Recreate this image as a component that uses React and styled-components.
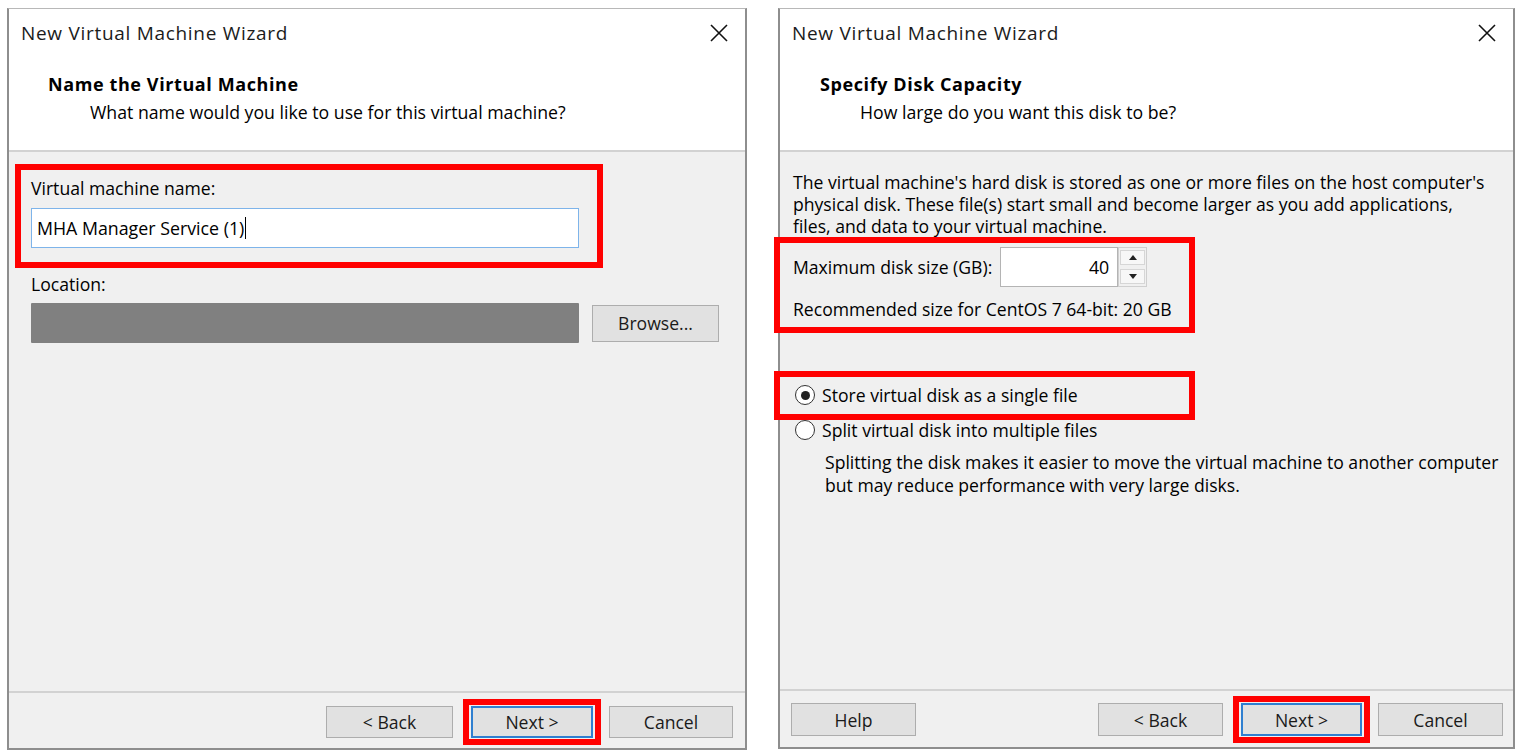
import React from "react";
import styled, { createGlobalStyle } from "styled-components";

const GlobalStyle = createGlobalStyle`
  body {
    margin: 0;
    background: #ffffff;
    font-family: "Open Sans", "Liberation Sans", sans-serif;
    color: #000000;
  }
`;

const Page = styled.div`
  display: flex;
  align-items: flex-start;
  gap: 31px;
  padding: 8px 0 0 7px;
  width: 1518px;
  height: 752px;
  box-sizing: border-box;
`;

const Dialog = styled.div`
  width: ${(p) => p.$w}px;
  height: ${(p) => p.$h}px;
  box-sizing: border-box;
  border: 2px solid #8e8e8e;
  border-top: 1px solid #b8b8b8;
  background: #f0f0f0;
  display: flex;
  flex-direction: column;
`;

const Header = styled.div`
  height: 143px;
  flex-shrink: 0;
  box-sizing: border-box;
  background: #ffffff;
  border-bottom: 2px solid #d2d2d2;
  padding: 12px 0 0 12px;
  position: relative;
`;

const TitleBar = styled.div`
  font-size: 19px;
  letter-spacing: 0.7px;
  line-height: 24px;
  color: #1b1b1b;
`;

const CloseButton = styled.div`
  position: absolute;
  top: 14px;
  right: 16px;
  width: 20px;
  height: 20px;
`;

const Heading = styled.div`
  margin: 27px 0 0 ${(p) => p.$indent}px;
  font-size: 18px;
  letter-spacing: 0.6px;
  font-weight: 700;
  line-height: 24px;
`;

const SubHeading = styled.div`
  margin: 4px 0 0 ${(p) => p.$indent}px;
  font-size: 17.7px;
  line-height: 24px;
`;

const Body = styled.div`
  flex: 1;
  display: flex;
  flex-direction: column;
  align-items: flex-start;
  padding: ${(p) => p.$pad};
  font-size: 17.6px;
`;

const Highlight = styled.div`
  border: 6px solid #ff0000;
  box-sizing: border-box;
  width: ${(p) => p.$w}px;
  margin: ${(p) => p.$m};
  padding: ${(p) => p.$pad};
`;

const Label = styled.div`
  line-height: ${(p) => p.$lh || 24}px;
  margin-top: ${(p) => p.$mt || 0}px;
  white-space: nowrap;
`;

const TextInput = styled.div`
  width: ${(p) => p.$w}px;
  height: 40px;
  box-sizing: border-box;
  margin-top: ${(p) => p.$mt || 0}px;
  background: #ffffff;
  border: 1px solid ${(p) => (p.$focused ? "#7eb4ea" : "#b4b4b4")};
  display: flex;
  align-items: center;
  justify-content: ${(p) => (p.$right ? "flex-end" : "flex-start")};
  padding: 0 8px 0 5px;
  font-size: 17.8px;
`;

const Caret = styled.span`
  display: inline-block;
  width: 1px;
  height: 22px;
  background: #000000;
  margin-left: 1px;
`;

const Row = styled.div`
  display: flex;
  align-items: center;
  gap: ${(p) => p.$gap || 0}px;
  margin-top: ${(p) => p.$mt || 0}px;
`;

const PathBar = styled.div`
  width: 548px;
  height: 40px;
  background: #808080;
  border-radius: 1px;
`;

const Button = styled.div`
  width: ${(p) => p.$w || 125}px;
  height: ${(p) => p.$h || 33}px;
  box-sizing: border-box;
  background: #e1e1e1;
  border: ${(p) => (p.$default ? "2px solid #2f7fd0" : "1px solid #adadad")};
  display: flex;
  align-items: center;
  justify-content: center;
  font-size: 17.6px;
  color: #1a1a1a;
`;

const Footer = styled.div`
  height: ${(p) => p.$h}px;
  flex-shrink: 0;
  box-sizing: border-box;
  border-top: 2px solid #d2d2d2;
  display: flex;
  align-items: flex-start;
  padding: ${(p) => p.$pad};
`;

const Spacer = styled.div`
  flex: 1;
`;

const NextFrame = styled.div`
  border: 6px solid #ff0000;
  padding: 1px 2px;
  margin: ${(p) => p.$m};
`;

const Paragraph = styled.div`
  line-height: ${(p) => p.$lh || 22}px;
  margin-left: ${(p) => p.$ml || 0}px;
  margin-top: ${(p) => p.$mt || 0}px;
`;

const Spinner = styled.div`
  width: 29px;
  height: 40px;
  box-sizing: border-box;
  border: 1px solid #cfcfcf;
  background: #f0f0f0;
  display: flex;
  flex-direction: column;
  justify-content: space-between;
  padding: 2px 1px;
`;

const SpinButton = styled.div`
  height: 15px;
  box-sizing: border-box;
  border: 1px solid #d6d6d6;
  background: #f7f7f7;
  display: flex;
  align-items: center;
  justify-content: center;
`;

const RadioRow = styled.label`
  display: flex;
  align-items: center;
  gap: 7px;
  height: 22px;
  line-height: 22px;
  margin: ${(p) => p.$m || "0"};
  white-space: nowrap;
`;

const RadioCircle = styled.span`
  width: 20px;
  height: 20px;
  box-sizing: border-box;
  border-radius: 50%;
  border: 1.5px solid #333333;
  background: #ffffff;
  display: flex;
  align-items: center;
  justify-content: center;

  &::after {
    content: "";
    width: 9px;
    height: 9px;
    border-radius: 50%;
    background: ${(p) => (p.$checked ? "#222222" : "transparent")};
  }
`;

const CloseIcon = () => (
  <CloseButton>
    <svg width="20" height="20" viewBox="0 0 20 20">
      <path d="M2 2 L18 18 M18 2 L2 18" stroke="#111" strokeWidth="1.6" />
    </svg>
  </CloseButton>
);

const Arrow = ({ up }) => (
  <svg width="8" height="5" viewBox="0 0 8 5">
    <path d={up ? "M0 5 L4 0 L8 5 Z" : "M0 0 L4 5 L8 0 Z"} fill="#222" />
  </svg>
);

const NameDialog = () => (
  <Dialog $w={740} $h={742}>
    <Header>
      <TitleBar>New Virtual Machine Wizard</TitleBar>
      <CloseIcon />
      <Heading $indent={27}>Name the Virtual Machine</Heading>
      <SubHeading $indent={69}>
        What name would you like to use for this virtual machine?
      </SubHeading>
    </Header>
    <Body $pad="12px 22px 0 22px">
      <Highlight $w={588} $m="0 0 0 -16px" $pad="6px 0 14px 10px">
        <Label>Virtual machine name:</Label>
        <TextInput $w={548} $mt={8} $focused>
          MHA Manager Service (1)
          <Caret />
        </TextInput>
      </Highlight>
      <Label $mt={4}>Location:</Label>
      <Row $gap={13} $mt={7}>
        <PathBar />
        <Button $w={127} $h={37}>
          Browse...
        </Button>
      </Row>
    </Body>
    <Footer $h={57} $pad="13px 12px 0 0">
      <Spacer />
      <Button $w={127} $h={32}>
        &lt; Back
      </Button>
      <NextFrame $m="-7px 8px 0 10px">
        <Button $w={122} $h={32} $default>
          Next &gt;
        </Button>
      </NextFrame>
      <Button $w={124} $h={32}>
        Cancel
      </Button>
    </Footer>
  </Dialog>
);

const DiskDialog = () => (
  <Dialog $w={737} $h={741}>
    <Header>
      <TitleBar>New Virtual Machine Wizard</TitleBar>
      <CloseIcon />
      <Heading $indent={28}>Specify Disk Capacity</Heading>
      <SubHeading $indent={68}>How large do you want this disk to be?</SubHeading>
    </Header>
    <Body $pad="19px 13px 0 13px">
      <Paragraph>
        The virtual machine's hard disk is stored as one or more files on the host computer's
        <br />
        physical disk. These file(s) start small and become larger as you add applications,
        <br />
        files, and data to your virtual machine.
      </Paragraph>
      <Highlight $w={421} $m="0 0 0 -19px" $pad="4px 0 7px 13px">
        <Row $gap={8}>
          <Label>Maximum disk size (GB):</Label>
          <Row>
            <TextInput $w={118} $right>
              40
            </TextInput>
            <Spinner>
              <SpinButton>
                <Arrow up />
              </SpinButton>
              <SpinButton>
                <Arrow />
              </SpinButton>
            </Spinner>
          </Row>
        </Row>
        <Label $lh={22} $mt={11}>
          Recommended size for CentOS 7 64-bit: 20 GB
        </Label>
      </Highlight>
      <Highlight $w={421} $m="38px 0 0 -19px" $pad="7px 0 8px 15px">
        <RadioRow>
          <RadioCircle $checked />
          Store virtual disk as a single file
        </RadioRow>
      </Highlight>
      <RadioRow $m="-1px 0 0 2px">
        <RadioCircle />
        Split virtual disk into multiple files
      </RadioRow>
      <Paragraph $ml={32} $mt={10} $lh={23}>
        Splitting the disk makes it easier to move the virtual machine to another computer
        <br />
        but may reduce performance with very large disks.
      </Paragraph>
    </Body>
    <Footer $h={58} $pad="12px 10px 0 11px">
      <Button $w={125} $h={33}>
        Help
      </Button>
      <Spacer />
      <Button $w={125} $h={33}>
        &lt; Back
      </Button>
      <NextFrame $m="-7px 8px 0 10px">
        <Button $w={121} $h={33} $default>
          Next &gt;
        </Button>
      </NextFrame>
      <Button $w={125} $h={33}>
        Cancel
      </Button>
    </Footer>
  </Dialog>
);

const App = () => (
  <>
    <GlobalStyle />
    <Page>
      <NameDialog />
      <DiskDialog />
    </Page>
  </>
);

export default App;
